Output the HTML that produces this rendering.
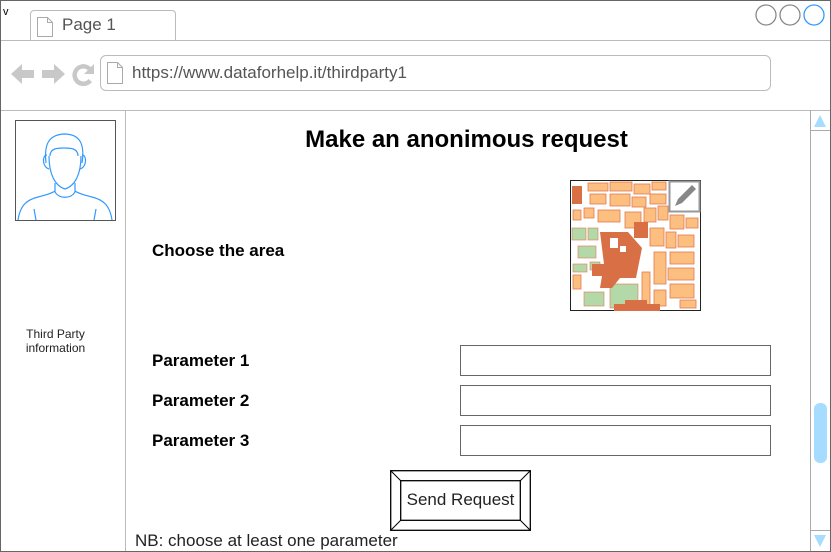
<!DOCTYPE html>
<html><head><style>
*{margin:0;padding:0;box-sizing:border-box}
body{width:831px;height:552px;position:relative;background:#fff;font-family:"Liberation Sans",sans-serif;overflow:hidden}
.a{position:absolute}
.lbl{position:absolute;font-weight:bold;font-size:17px;color:#000}
.inp{position:absolute;left:460px;width:311px;height:31px;border:1px solid #666;background:#fff}
</style></head><body>
<div class="a" style="left:0;top:0;width:831px;height:552px;border:1px solid #666"></div>
<div class="a" style="left:3px;top:6px;font-size:11px">v</div>
<div class="a" style="left:30px;top:10px;width:146px;height:31px;border:1px solid #bbb;border-bottom:none;border-radius:4px 4px 0 0;background:#fff"></div>
<svg class="a" style="left:36px;top:16px" width="18" height="22"><path d="M1.5 1.5h10l5 5v14h-15z M11.5 1.5v5h5" fill="#fff" stroke="#aaa"/></svg>
<div class="a" style="left:62px;top:15px;font-size:17px;color:#555">Page 1</div>
<div class="a" style="left:1px;top:40px;width:829px;height:1px;background:#bbb"></div>
<svg class="a" style="left:755px;top:4px" width="72" height="24"><circle cx="11" cy="11" r="10" fill="none" stroke="#888" stroke-width="1.3"/><circle cx="35" cy="11" r="10" fill="none" stroke="#888" stroke-width="1.3"/><circle cx="59" cy="11" r="10" fill="none" stroke="#3399ff" stroke-width="1.3"/></svg>
<svg class="a" style="left:11px;top:62px" width="24" height="24" fill="#c8c8c8"><path d="M0 12l11-10v6h12v8h-12v6z"/></svg>
<svg class="a" style="left:41px;top:62px" width="24" height="24" fill="#c8c8c8"><path d="M24 12l-11-10v6h-12v8h12v6z"/></svg>
<svg class="a" style="left:70px;top:61px" width="26" height="26" fill="#c8c8c8"><path d="M24 3v10h-10l3.8-3.8A6.5 6.5 0 1 0 18.5 18l3.5 3a11 11 0 1 1-1.1-14.9z"/></svg>
<div class="a" style="left:100px;top:55px;width:671px;height:36px;border:1px solid #bbb;border-radius:6px"></div>
<svg class="a" style="left:106px;top:61px" width="18" height="24"><path d="M1.5 1.5h10l5 5v16h-15z M11.5 1.5v5h5" fill="#fff" stroke="#aaa"/></svg>
<div class="a" style="left:132px;top:63px;font-size:17px;color:#555">https://www.dataforhelp.it/thirdparty1</div>
<div class="a" style="left:1px;top:110px;width:829px;height:1px;background:#bbb"></div>
<div class="a" style="left:125px;top:110px;width:1px;height:441px;background:#bbb"></div>
<div class="a" style="left:15px;top:120px;width:101px;height:101px;border:1px solid #555"></div>
<svg class="a" style="left:16px;top:121px" width="99" height="99" fill="none" stroke="#3399ff" stroke-width="1.2"><path d="M30 42c-2-18 2-28 18-29 16 0 21 10 18 29"/><path d="M34 35c0-8 8-8 14-8s14 0 14 8"/><path d="M33 35c0 18 6 30 16 33 10-3 16-15 16-33"/><path d="M31 34c-5 0-5 12 2 14M66 34c5 0 5 12-2 14"/><path d="M39 62v9c4 7 16 7 20 0v-9"/><path d="M2 99c2-14 8-20 20-23 8-2 14-4 17-6M96 99c-2-14-8-20-20-23-8-2-14-4-17-6"/><path d="M18 88l2 11M80 88l-2 11"/></svg>
<div class="a" style="left:0;top:327px;width:111px;text-align:center;font-size:12px;line-height:14px;color:#222">Third Party<br>information</div>
<div class="a" style="left:126px;top:126px;width:681px;text-align:center;font-size:24px;font-weight:bold">Make an anonimous request</div>
<svg class="a" style="left:570px;top:180px" width="132" height="131">
<rect x="0.5" y="0.5" width="130" height="130" fill="#fff" stroke="#222"/>
<g fill="#fdbf80" stroke="#e07a50" stroke-width="0.8">
<rect x="18" y="3" width="20" height="8"/><rect x="40" y="2" width="22" height="9"/><rect x="64" y="4" width="16" height="10"/><rect x="82" y="2" width="14" height="8"/>
<rect x="20" y="14" width="16" height="10"/><rect x="40" y="14" width="20" height="12"/><rect x="62" y="17" width="14" height="10"/><rect x="80" y="14" width="16" height="10"/>
<rect x="28" y="30" width="22" height="12"/><rect x="55" y="32" width="16" height="16"/><rect x="74" y="28" width="12" height="14"/><rect x="88" y="26" width="10" height="14"/><rect x="100" y="35" width="14" height="14"/><rect x="116" y="38" width="12" height="10"/>
<rect x="80" y="48" width="14" height="18"/><rect x="96" y="52" width="10" height="16"/><rect x="108" y="55" width="16" height="12"/>
<rect x="84" y="72" width="12" height="32"/><rect x="100" y="72" width="24" height="12"/><rect x="98" y="88" width="26" height="12"/><rect x="100" y="104" width="24" height="14"/>
<rect x="72" y="92" width="8" height="34"/><rect x="84" y="110" width="12" height="16"/><rect x="110" y="120" width="16" height="8"/>
<rect x="3" y="30" width="8" height="10"/><rect x="3" y="95" width="8" height="14"/><rect x="14" y="28" width="10" height="10"/>
</g>
<g fill="#b3d9a8" stroke="#e07a50" stroke-width="0.6"><rect x="2" y="48" width="14" height="12"/><rect x="8" y="66" width="18" height="12"/><rect x="3" y="84" width="14" height="8"/><rect x="40" y="104" width="28" height="24"/><rect x="20" y="82" width="10" height="8"/><rect x="14" y="112" width="20" height="14"/><rect x="18" y="48" width="10" height="12"/></g>
<g fill="#d96f45"><rect x="2" y="6" width="10" height="18"/><path d="M30 52h28l14 16-6 30h-16l-8 10H30l2-12h-10v-12h12z"/><rect x="64" y="42" width="14" height="16"/><rect x="44" y="124" width="46" height="7"/><rect x="100" y="2" width="14" height="8"/><rect x="104" y="18" width="8" height="10"/><rect x="55" y="120" width="22" height="6"/></g>
<g fill="#fff"><rect x="40" y="58" width="8" height="10"/><rect x="50" y="66" width="6" height="6"/></g>
<rect x="99.5" y="1.5" width="30" height="30" fill="#fff" stroke="#999" stroke-width="2"/>
<path d="M105 26l3-7 14-14 4 4-14 14z" fill="#888"/>
</svg>
<div class="lbl" style="left:152px;top:241px">Choose the area</div>
<div class="lbl" style="left:152px;top:351px">Parameter 1</div>
<div class="lbl" style="left:152px;top:391px">Parameter 2</div>
<div class="lbl" style="left:152px;top:431px">Parameter 3</div>
<div class="inp" style="top:345px"></div>
<div class="inp" style="top:385px"></div>
<div class="inp" style="top:425px"></div>
<svg class="a" style="left:390px;top:470px" width="141" height="61" fill="none" stroke="#000" stroke-width="1.3"><rect x="0.7" y="0.7" width="139.6" height="59.6"/><rect x="10.7" y="10.7" width="119.6" height="39.6"/><path d="M1 1l10 10M140 1l-10 10M1 60l10-10M140 60l-10-10" stroke-width="1"/></svg>
<div class="a" style="left:391px;top:490px;width:139px;text-align:center;font-size:17px;color:#222">Send Request</div>
<div class="a" style="left:135px;top:531px;font-size:17px;color:#222">NB: choose at least one parameter</div>
<div class="a" style="left:810px;top:110px;width:1px;height:441px;background:#aaa"></div>
<div class="a" style="left:810px;top:130px;width:20px;height:1px;background:#aaa"></div>
<div class="a" style="left:810px;top:530px;width:20px;height:1px;background:#aaa"></div>
<svg class="a" style="left:812px;top:113px" width="16" height="16"><path d="M2 14h12L8 2z" fill="#a6dcff"/></svg>
<svg class="a" style="left:812px;top:533px" width="16" height="16"><path d="M2 2h12L8 14z" fill="#a6dcff"/></svg>
<div class="a" style="left:814px;top:403px;width:13px;height:60px;border-radius:6px;background:#a6dcff"></div>
</body></html>
